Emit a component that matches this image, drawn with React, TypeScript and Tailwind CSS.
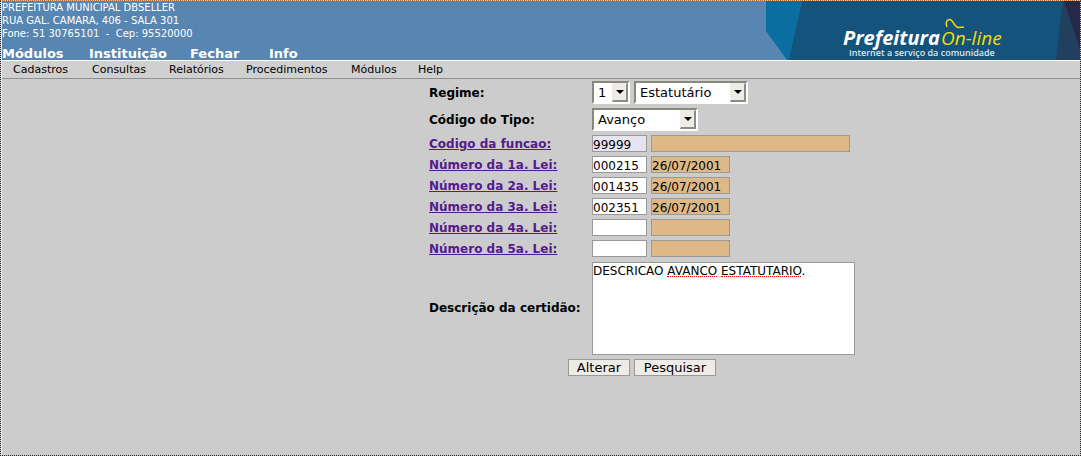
import { useState } from "react";
import type { ReactNode } from "react";

const mainLinks = [
  { text: "Módulos", width: "w-[87px]" },
  { text: "Instituição", width: "w-[101px]" },
  { text: "Fechar", width: "w-[79px]" },
  { text: "Info", width: "w-[40px]" },
];

const menus = [
  { text: "Cadastros", width: "w-[79px]" },
  { text: "Consultas", width: "w-[77px]" },
  { text: "Relatórios", width: "w-[77px]" },
  { text: "Procedimentos", width: "w-[105px]" },
  { text: "Módulos", width: "w-[67px]" },
  { text: "Help", width: "w-[40px]" },
];

const laws = [
  { number: "000215", date: "26/07/2001" },
  { number: "001435", date: "26/07/2001" },
  { number: "002351", date: "26/07/2001" },
  { number: "", date: "" },
  { number: "", date: "" },
];

function Banner() {
  return (
    <svg
      className="h-[59px] w-[314px] shrink-0"
      viewBox="0 0 314 59"
      role="img"
      aria-label="Prefeitura On-line"
    >
      <path d="M0 0H36L24 59H21L0 30Z" fill="#0a6fa0" />
      <path d="M36 0H314V59H23Z" fill="#14537b" />
      <path d="M297 0H314V59H290Z" fill="#213f5f" />
      <path d="M298 0H314V48Z" fill="#272747" />
      <text x="77" y="44" fontFamily="'Open Sans', sans-serif" fontSize="20" fontWeight="700" fontStyle="italic" fill="#fff">
        Prefeitura
      </text>
      <text x="175" y="44" fontFamily="'Open Sans', sans-serif" fontSize="19" fontStyle="italic" fill="#f2dc0a">
        On-line
      </text>
      <path
        d="M181 26C179 22 181 18 184 18.5C188 19.5 188 27 193 26.5L198 26"
        fill="none"
        stroke="#f2dc0a"
        strokeWidth="1.5"
      />
      <text x="83" y="55" fontFamily="'Open Sans', sans-serif" fontSize="9" fontWeight="600" fill="#dce8f0">
        Internet a serviço da comunidade
      </text>
    </svg>
  );
}

function Select({ id, value, width, label }: { id: string; value: string; width: string; label?: string }) {
  return (
    <div className={`relative h-[23px] ${width}`}>
      <select
        id={id}
        aria-label={label}
        defaultValue={value}
        className="h-full w-full appearance-none border-2 border-t-[#88887f] border-r-white border-b-white border-l-[#88887f] bg-white pl-1 text-[13px] leading-4 text-black"
      >
        <option>{value}</option>
      </select>
      <span className="pointer-events-none absolute top-[2px] right-[2px] flex h-[19px] w-4 items-center justify-center border-t border-r-2 border-b-2 border-l border-t-[#efebe7] border-r-[#8b8b87] border-b-[#8b8b87] border-l-[#efebe7] bg-[#efebe7]">
        <svg className="h-1 w-2" viewBox="0 0 8 4" aria-hidden="true">
          <path d="M0 0H8L4 4Z" fill="#000" />
        </svg>
      </span>
    </div>
  );
}

function Field({ id, value, style, label }: { id: string; value: string; style: string; label?: string }) {
  const [text, setText] = useState(value);
  return (
    <input
      id={id}
      aria-label={label}
      value={text}
      onChange={(e) => setText(e.target.value)}
      className={`h-[17px] border border-[#999] pt-[2px] text-[12px] leading-[14px] text-black ${style}`}
    />
  );
}

function Row({ id, label, link, children }: { id: string; label: string; link?: boolean; children: ReactNode }) {
  return (
    <>
      <label htmlFor={id} className="text-[12px] font-bold whitespace-nowrap">
        {link ? (
          <a href="#" className="text-[#551a8b] underline">
            {label}
          </a>
        ) : (
          label
        )}
      </label>
      <div className="flex gap-1">{children}</div>
    </>
  );
}

export default function App() {
  return (
    <div className="flex min-h-screen flex-col border border-dotted border-[#222] border-t-[#b5773f] bg-[#ccc] font-['DejaVu_Sans',sans-serif] text-[13px] leading-4 text-black">
      <div className="flex grow flex-col border-l border-[#eee]">
        <header className="flex h-[59px] justify-between bg-[#5786b2] text-white">
          <div className="flex flex-col justify-between">
            <address className="text-[10px] leading-[13px] whitespace-pre not-italic">
              {"PREFEITURA MUNICIPAL DBSELLER\nRUA GAL. CAMARA, 406 - SALA 301\nFone: 51 30765101  -  Cep: 95520000"}
            </address>
            <nav className="flex text-[13px] leading-3 font-bold">
              {mainLinks.map((item) => (
                <a key={item.text} href="#" className={item.width}>
                  {item.text}
                </a>
              ))}
            </nav>
          </div>
          <Banner />
        </header>
        <nav className="flex h-[19px] border-t border-b border-t-white border-b-[#8f8f8f] bg-[#d0d0d0] pl-[11px] text-[11px] leading-[17px]">
          {menus.map((item) => (
            <a key={item.text} href="#" className={item.width}>
              {item.text}
            </a>
          ))}
        </nav>
        <main className="flex justify-center pt-[2px] pl-[202px]">
          <form className="flex flex-col items-center gap-1" onSubmit={(e) => e.preventDefault()}>
            <div className="grid grid-cols-[159px_263px] items-center gap-1">
              <Row id="regime" label="Regime:">
                <Select id="regime" value="1" width="w-[38px]" />
                <Select id="regime-nome" value="Estatutário" width="w-[114px]" label="Nome do regime" />
              </Row>
              <Row id="tipo" label="Código do Tipo:">
                <Select id="tipo" value="Avanço" width="w-[106px]" />
              </Row>
              <Row id="funcao" label="Codigo da funcao:" link>
                <Field id="funcao" value="99999" style="w-[55px] bg-[#e6e4f1]" />
                <Field id="funcao-nome" value="" style="w-[199px] bg-[#deb887]" label="Nome da funcao" />
              </Row>
              {laws.map((law, i) => (
                <Row key={i} id={`lei-${i + 1}`} label={`Número da ${i + 1}a. Lei:`} link>
                  <Field id={`lei-${i + 1}`} value={law.number} style="w-[55px] bg-white" />
                  <Field id={`data-${i + 1}`} value={law.date} style="w-[79px] bg-[#deb887]" label={`Data da ${i + 1}a. Lei`} />
                </Row>
              ))}
              <Row id="descricao" label="Descrição da certidão:">
                <div className="relative w-full pt-px">
                  <textarea
                    id="descricao"
                    spellCheck={false}
                    defaultValue="DESCRICAO AVANCO ESTATUTARIO."
                    className="block h-[93px] w-full resize-none border border-[#999] bg-white text-[12px] leading-4 text-black"
                  />
                  <div className="pointer-events-none absolute top-[15px] left-[75px] flex gap-1" aria-hidden="true">
                    <span className="w-[50px] border-b border-dotted border-b-red-600" />
                    <span className="w-20 border-b border-dotted border-b-red-600" />
                  </div>
                </div>
              </Row>
            </div>
            <div className="flex gap-1">
              <button type="submit" className="h-[17px] w-[62px] border border-[#999] bg-[#efebe7] leading-4">
                Alterar
              </button>
              <button type="button" className="h-[17px] w-[82px] border border-[#999] bg-[#efebe7] leading-4">
                Pesquisar
              </button>
            </div>
          </form>
        </main>
      </div>
    </div>
  );
}
